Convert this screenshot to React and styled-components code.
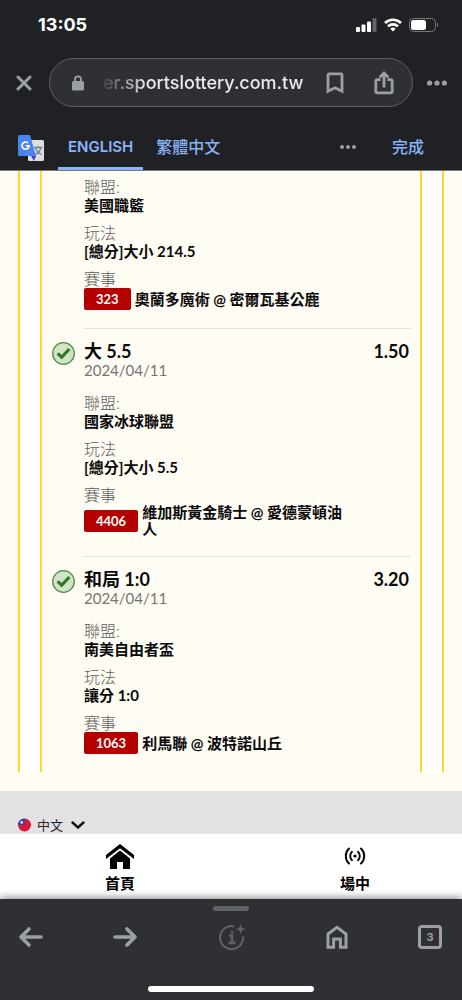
import React from "react";
import styled, { createGlobalStyle } from "styled-components";

const cjk = `"Noto Sans CJK TC", sans-serif`;

const GlobalStyle = createGlobalStyle`
  *, *::before, *::after { box-sizing: border-box; }
  body { margin: 0; background: #2f3034; font-family: Lato, ${cjk}; color: #0a0a0a; }
  button, input, select { font: inherit; color: inherit; border: 0; background: none; margin: 0; padding: 0; }
  p, h2, dl, dd, ul { margin: 0; padding: 0; }
  svg { display: block; }
`;

const Screen = styled.div`
  display: flex;
  flex-direction: column;
  min-height: 100vh;
`;

/* Browser chrome: top */

const Header = styled.header`
  background: #202125;
  color: #fff;
  border-bottom: 1px solid #77787b;
`;

const StatusBar = styled.div`
  display: flex;
  align-items: center;
  justify-content: space-between;
  height: 50px;
  padding: 0 23px 0 38px;
`;

const Clock = styled.time`
  font: 700 18px/24px Inter, sans-serif;
`;

const StatusIcons = styled.div`
  display: flex;
  align-items: center;
  gap: 7px;
`;

const AddressRow = styled.div`
  display: flex;
  align-items: center;
  padding: 8px 15px 0 16px;
`;

const IconButton = styled.button`
  display: flex;
  align-items: center;
  justify-content: center;
  flex: none;
  color: ${(p) => p.$color || "#9aa0a6"};
  cursor: pointer;
`;

const AddressPill = styled.div`
  flex: 1;
  min-width: 0;
  display: flex;
  align-items: center;
  height: 49px;
  margin: 0 14px 0 17px;
  padding: 0 18px 0 21px;
  border: 1px solid #5f6064;
  border-radius: 25px;
  background: #2f3034;
  color: #9aa0a6;
`;

const AddressInput = styled.input`
  flex: 1;
  min-width: 0;
  margin: 0 20px 0 18px;
  outline: 0;
  font: 500 18px/24px Inter, sans-serif;
  color: #e8eaed;
  mask-image: linear-gradient(to right, rgba(0, 0, 0, 0.1), #000 44px);
`;

const PillActions = styled.div`
  display: flex;
  align-items: center;
  gap: 30px;
`;

const TranslateBar = styled.div`
  display: flex;
  align-items: stretch;
  height: 63px;
  padding: 0 38px 0 18px;
`;

const TranslateLogo = styled.div`
  display: flex;
  align-items: center;
  padding-top: 18px;
  margin-right: 14px;
`;

const LanguageTab = styled.button`
  padding: 20px 10px 0;
  margin-right: 3px;
  border-bottom: 3px solid ${(p) => (p.$active ? "#8ab4f8" : "transparent")};
  color: #8ab4f8;
  font: 500 16px/24px Lato, ${cjk};
  font-family: ${(p) => (p.$latin ? "Inter" : "Lato")}, ${cjk};
  font-size: ${(p) => (p.$latin ? 15 : 16)}px;
  font-weight: ${(p) => (p.$latin ? 600 : 500)};
  cursor: pointer;
`;

const TranslateActions = styled.div`
  display: flex;
  align-items: center;
  gap: 36px;
  margin-left: auto;
  padding-top: 17px;
`;

const DoneButton = styled.button`
  color: #8ab4f8;
  font: 500 16px/24px Lato, ${cjk};
  cursor: pointer;
`;

/* Page: ticket */

const Page = styled.main`
  flex: 1;
  padding: 0 18px 19px;
  background: #fffcf4;
`;

const Ticket = styled.div`
  padding: 0 20px;
  border: solid #ffd52e;
  border-width: 0 2px;
  background: #fff;
`;

const TicketBody = styled.div`
  padding: 0 9px 0 42px;
  border: solid #ffd52e;
  border-width: 0 2px;
  background: #fffcf4;
`;

const Bet = styled.section`
  position: relative;
  padding: ${(p) => (p.$first ? 6 : 12)}px 0 18px;

  & + & {
    border-top: 1px solid #e2e0da;
  }
`;

const WonMark = styled.div`
  position: absolute;
  left: -32px;
  top: 13px;
`;

const BetHead = styled.div`
  display: flex;
  justify-content: space-between;
  padding-right: 2px;
  font-size: 18px;
  line-height: 20px;
`;

const Pick = styled.h2`
  font-size: 18px;
  font-weight: 700;
`;

const Odds = styled.span`
  font-weight: 700;
`;

const BetDate = styled.p`
  margin-bottom: 14px;
  color: #757575;
  font-size: 15px;
  line-height: 18px;
`;

const Details = styled.dl`
  display: flex;
  flex-direction: column;
  gap: 8px;
  font-size: 15px;
  line-height: 19px;
`;

const Label = styled.dt`
  color: #606060;
  font-size: 16px;
  font-weight: 300;
`;

const Value = styled.dd`
  font-weight: 700;
`;

const EventRow = styled.dd`
  display: flex;
  align-items: center;
  gap: 4px;
  padding-right: 60px;
  font-weight: 700;
  line-height: 17px;
`;

const EventCode = styled.span`
  flex: none;
  padding: 0 12px;
  border-radius: 2px;
  background: #b50000;
  color: #fff;
  font-size: 13px;
  line-height: 22px;
`;

/* Page: footer and site navigation */

const PageFooter = styled.footer`
  display: flex;
  align-items: center;
  gap: 6px;
  padding: 25px 18px 0;
  background: #e2e2e2;
`;

const LanguageField = styled.label`
  display: flex;
  align-items: center;
  gap: 7px;
`;

const LanguageSelect = styled.select`
  appearance: none;
  font-size: 13px;
  line-height: 18px;
  height: 18px;
  color: #222;
`;

const SiteNav = styled.nav`
  display: flex;
  justify-content: space-between;
  height: 65px;
  padding: 8px 72px 0 85px;
  background: #fff;
`;

const SiteLink = styled.a`
  display: flex;
  flex-direction: column;
  align-items: center;
  gap: 1px;
  width: 70px;
  color: #000;
  font-size: 15px;
  font-weight: 700;
  line-height: 24px;
  text-decoration: none;
`;

const LinkIcon = styled.span`
  display: flex;
  align-items: center;
  height: 28px;
`;

/* Browser chrome: bottom */

const Toolbar = styled.footer`
  position: relative;
  display: flex;
  flex-direction: column;
  align-items: center;
  height: 101px;
  padding: 7px 0 8px;
  background: #2f3034;
  box-shadow: 0 -1px 8px rgba(0, 0, 0, 0.5);
`;

const Handle = styled.div`
  width: 36px;
  height: 5px;
  border-radius: 3px;
  background: #5f6368;
`;

const ToolbarButtons = styled.div`
  display: grid;
  grid-template-columns: 94fr 106fr 107fr 93fr 24px;
  justify-items: start;
  align-items: center;
  width: 100%;
  height: 52px;
  padding: 0 20px 0 18px;
`;

const TabsButton = styled.button`
  width: 24px;
  height: 24px;
  border: 3px solid #9aa0a6;
  border-radius: 4px;
  color: #9aa0a6;
  font: 700 11px/16px Inter, sans-serif;
  text-align: center;
  cursor: pointer;
`;

const HomeIndicator = styled.div`
  width: 166px;
  height: 6px;
  margin-top: auto;
  border-radius: 3px;
  background: #fff;
`;

/* Icons */

const Signal = () => (
  <svg width="21" height="14" viewBox="0 0 21 14" fill="#fff" aria-hidden="true">
    <rect x="0" y="9" width="4" height="5" rx="1" />
    <rect x="5.5" y="6.5" width="4" height="7.5" rx="1" />
    <rect x="11" y="3.5" width="4" height="10.5" rx="1" />
    <rect x="16.5" y="0" width="4" height="14" rx="1" opacity=".3" />
  </svg>
);

const Wifi = () => (
  <svg width="18" height="14" viewBox="0 0 18 14" fill="none" stroke="#fff" strokeWidth="2.6" aria-hidden="true">
    <path d="M1 5a11.4 11.4 0 0 1 16 0" />
    <path d="M4 8.4a7.2 7.2 0 0 1 10 0" />
    <path d="M6.3 10.7a3.9 3.9 0 0 1 5.4 0L9 13.6z" fill="#fff" stroke="none" />
  </svg>
);

const Battery = () => (
  <svg width="30" height="14" viewBox="0 0 30 14" aria-hidden="true">
    <rect x=".5" y=".5" width="26" height="13" rx="4" fill="none" stroke="#77787b" />
    <rect x="2" y="2" width="15" height="10" rx="2.5" fill="#fff" />
    <path d="M28 4.8c1.5.5 1.5 3.9 0 4.4z" fill="#77787b" />
  </svg>
);

const Dots = ({ size, r }) => (
  <svg width={size} height="8" viewBox={`0 0 ${size} 8`} fill="currentColor" aria-hidden="true">
    <circle cx={r} cy="4" r={r} />
    <circle cx={size / 2} cy="4" r={r} />
    <circle cx={size - r} cy="4" r={r} />
  </svg>
);

const Close = () => (
  <svg width="16" height="16" viewBox="0 0 16 16" stroke="currentColor" strokeWidth="3" strokeLinecap="round" aria-hidden="true">
    <path d="M2 2l12 12M14 2L2 14" />
  </svg>
);

const Lock = () => (
  <svg width="14" height="16" viewBox="0 0 14 16" aria-hidden="true">
    <path d="M4 7V4.3a3 3 0 0 1 6 0V7" fill="none" stroke="currentColor" strokeWidth="1.8" />
    <rect x="1" y="6" width="12" height="9.5" rx="1.6" fill="currentColor" />
  </svg>
);

const Bookmark = () => (
  <svg width="18" height="22" viewBox="0 0 18 22" fill="none" stroke="currentColor" strokeWidth="2.8" aria-hidden="true">
    <path d="M2 2.9a1 1 0 0 1 1-1h12a1 1 0 0 1 1 1v16.3l-7-3.4-7 3.4z" />
  </svg>
);

const Share = () => (
  <svg width="20" height="24" viewBox="0 0 20 24" fill="none" stroke="currentColor" strokeWidth="2.8" aria-hidden="true">
    <path d="M6.5 8.7H3.4a1.6 1.6 0 0 0-1.6 1.6v10a1.6 1.6 0 0 0 1.6 1.6h13.2a1.6 1.6 0 0 0 1.6-1.6v-10a1.6 1.6 0 0 0-1.6-1.6h-3.1" />
    <path d="M10 16.5V2.5M5.6 6.4L10 2l4.4 4.4" />
  </svg>
);

const GoogleTranslate = () => (
  <svg width="26" height="26" viewBox="0 0 26 26" aria-hidden="true">
    <rect x="10" y="5" width="16" height="21" rx="1.6" fill="#dcdfe1" />
    <path d="M16 12.5h8.5M20.2 10.8v1.7M23 12.5c-.6 3-2.8 5.7-6 7.2M17.5 13c.8 2.8 3 5.2 6.2 6.5" fill="none" stroke="#6e8790" strokeWidth="1.3" />
    <path d="M13 21H18l-2 5z" fill="#4a3fc4" />
    <path d="M1.600 0H12l6 21H1.600A1.600 1.600 0 0 1 0 19.400V1.600A1.600 1.600 0 0 1 1.600 0z" fill="#4a84f0" />
    <path d="M10 7.900a3.600 3.600 0 1 0 1.200 2.900H7.800" fill="none" stroke="#fff" strokeWidth="1.7" />
  </svg>
);

const WonIcon = () => (
  <svg width="23" height="23" viewBox="0 0 23 23" role="img" aria-label="中獎">
    <circle cx="11.5" cy="11.5" r="10.8" fill="#d3e3c8" stroke="#4b8f3c" strokeWidth="1.3" />
    <path d="M5.7 11.3l4 4 7.6-8.3" fill="none" stroke="#2d7a1f" strokeWidth="3.2" />
  </svg>
);

const TaiwanFlag = () => (
  <svg width="13" height="14" viewBox="0 0 14 14" aria-hidden="true">
    <circle cx="7" cy="7" r="7" fill="#e0143c" />
    <path d="M7 0v7H0a7 7 0 0 1 7-7z" fill="#1c49b5" />
    <circle cx="4" cy="4.2" r="1.5" fill="#dfe8fa" />
  </svg>
);

const Chevron = () => (
  <svg width="14" height="8" viewBox="0 0 14 8" fill="none" stroke="#111" strokeWidth="2.4" strokeLinecap="round" aria-hidden="true">
    <path d="M1.5 1.5L7 6.5l5.500-5" />
  </svg>
);

const SiteHome = () => (
  <svg width="28" height="25" viewBox="0 0 28 25" aria-hidden="true">
    <path d="M0 11L14 0l14 11v4L14 4.300 0 15z" />
    <path d="M4 14.500l10-8 10 8V25h-7v-7h-6v7H4z" />
  </svg>
);

const Live = () => (
  <svg width="22" height="18" viewBox="0 0 22 18" fill="none" stroke="#000" strokeWidth="1.9" strokeLinecap="round" aria-hidden="true">
    <path d="M5 1.500c-4.300 4-4.300 11 0 15M17 1.500c4.300 4 4.300 11 0 15M8 4.800c-2.400 2.300-2.400 6.100 0 8.400M14 4.800c2.400 2.300 2.400 6.100 0 8.400" />
    <circle cx="11" cy="9" r="1.6" fill="#000" stroke="none" />
  </svg>
);

const Arrow = ({ forward }) => (
  <svg width="26" height="22" viewBox="0 0 26 22" fill="none" stroke="currentColor" strokeWidth="3.6" strokeLinecap="round" strokeLinejoin="round" aria-hidden="true">
    <path d={forward ? "M3 11h20M15 3l8 8-8 8" : "M23 11H3M11 3l-8 8 8 8"} />
  </svg>
);

const PageInfo = () => (
  <svg width="28" height="28" viewBox="0 0 28 28" fill="none" stroke="currentColor" strokeWidth="2" aria-hidden="true">
    <path d="M16 3.400A11.500 11.500 0 1 0 25 13.500" />
    <path d="M11 12.500h3V20M10.500 20h7M14 8v2.400" strokeWidth="2.4" />
    <path d="M22.500 1l1.300 3.700 3.700 1.300-3.700 1.300L22.500 11l-1.300-3.700L17.500 6l3.700-1.300z" fill="currentColor" stroke="none" />
  </svg>
);

const BrowserHome = () => (
  <svg width="24" height="24" viewBox="0 0 24 24" fill="none" stroke="currentColor" strokeWidth="3" aria-hidden="true">
    <path d="M3 9l9-6.700L21 9v13.300h-5.600V14H8.600v8.300H3z" />
  </svg>
);

/* Data */

const bets = [
  { league: "美國職籃", play: "[總分]大小 214.5", code: "323", event: "奧蘭多魔術 @ 密爾瓦基公鹿" },
  { pick: "大 5.5", odds: "1.50", date: "2024/04/11", league: "國家冰球聯盟", play: "[總分]大小 5.5", code: "4406", event: "維加斯黃金騎士 @ 愛德蒙頓油人" },
  { pick: "和局 1:0", odds: "3.20", date: "2024/04/11", league: "南美自由者盃", play: "讓分 1:0", code: "1063", event: "利馬聯 @ 波特諾山丘" },
];

export default function App() {
  return (
    <>
      <GlobalStyle />
      <Screen>
        <Header>
          <StatusBar>
            <Clock>13:05</Clock>
            <StatusIcons>
              <Signal />
              <Wifi />
              <Battery />
            </StatusIcons>
          </StatusBar>
          <AddressRow>
            <IconButton aria-label="關閉"><Close /></IconButton>
            <AddressPill>
              <Lock />
              <AddressInput aria-label="網址" readOnly value="er.sportslottery.com.tw" />
              <PillActions>
                <IconButton aria-label="書籤"><Bookmark /></IconButton>
                <IconButton aria-label="分享"><Share /></IconButton>
              </PillActions>
            </AddressPill>
            <IconButton aria-label="更多"><Dots size={20} r={2.6} /></IconButton>
          </AddressRow>
          <TranslateBar>
            <TranslateLogo><GoogleTranslate /></TranslateLogo>
            <LanguageTab $active $latin>ENGLISH</LanguageTab>
            <LanguageTab>繁體中文</LanguageTab>
            <TranslateActions>
              <IconButton aria-label="翻譯選項"><Dots size={16} r={2} /></IconButton>
              <DoneButton>完成</DoneButton>
            </TranslateActions>
          </TranslateBar>
        </Header>

        <Page>
          <Ticket>
            <TicketBody>
              {bets.map((bet, i) => (
                <Bet key={bet.code} $first={i === 0}>
                  {bet.pick && (
                    <>
                      <WonMark><WonIcon /></WonMark>
                      <BetHead>
                        <Pick>{bet.pick}</Pick>
                        <Odds>{bet.odds}</Odds>
                      </BetHead>
                      <BetDate>{bet.date}</BetDate>
                    </>
                  )}
                  <Details>
                    <div>
                      <Label>聯盟:</Label>
                      <Value>{bet.league}</Value>
                    </div>
                    <div>
                      <Label>玩法</Label>
                      <Value>{bet.play}</Value>
                    </div>
                    <div>
                      <Label>賽事</Label>
                      <EventRow>
                        <EventCode>{bet.code}</EventCode>
                        <span>{bet.event}</span>
                      </EventRow>
                    </div>
                  </Details>
                </Bet>
              ))}
            </TicketBody>
          </Ticket>
        </Page>

        <PageFooter>
          <TaiwanFlag />
          <LanguageField>
            <LanguageSelect aria-label="語言" defaultValue="zh">
              <option value="zh">中文</option>
            </LanguageSelect>
            <Chevron />
          </LanguageField>
        </PageFooter>
        <SiteNav>
          <SiteLink href="#home">
            <LinkIcon><SiteHome /></LinkIcon>
            首頁
          </SiteLink>
          <SiteLink href="#live">
            <LinkIcon><Live /></LinkIcon>
            場中
          </SiteLink>
        </SiteNav>

        <Toolbar>
          <Handle />
          <ToolbarButtons>
            <IconButton aria-label="上一頁"><Arrow /></IconButton>
            <IconButton aria-label="下一頁"><Arrow forward /></IconButton>
            <IconButton aria-label="網頁資訊" $color="#5f6368"><PageInfo /></IconButton>
            <IconButton aria-label="首頁"><BrowserHome /></IconButton>
            <TabsButton aria-label="分頁">3</TabsButton>
          </ToolbarButtons>
          <HomeIndicator />
        </Toolbar>
      </Screen>
    </>
  );
}
